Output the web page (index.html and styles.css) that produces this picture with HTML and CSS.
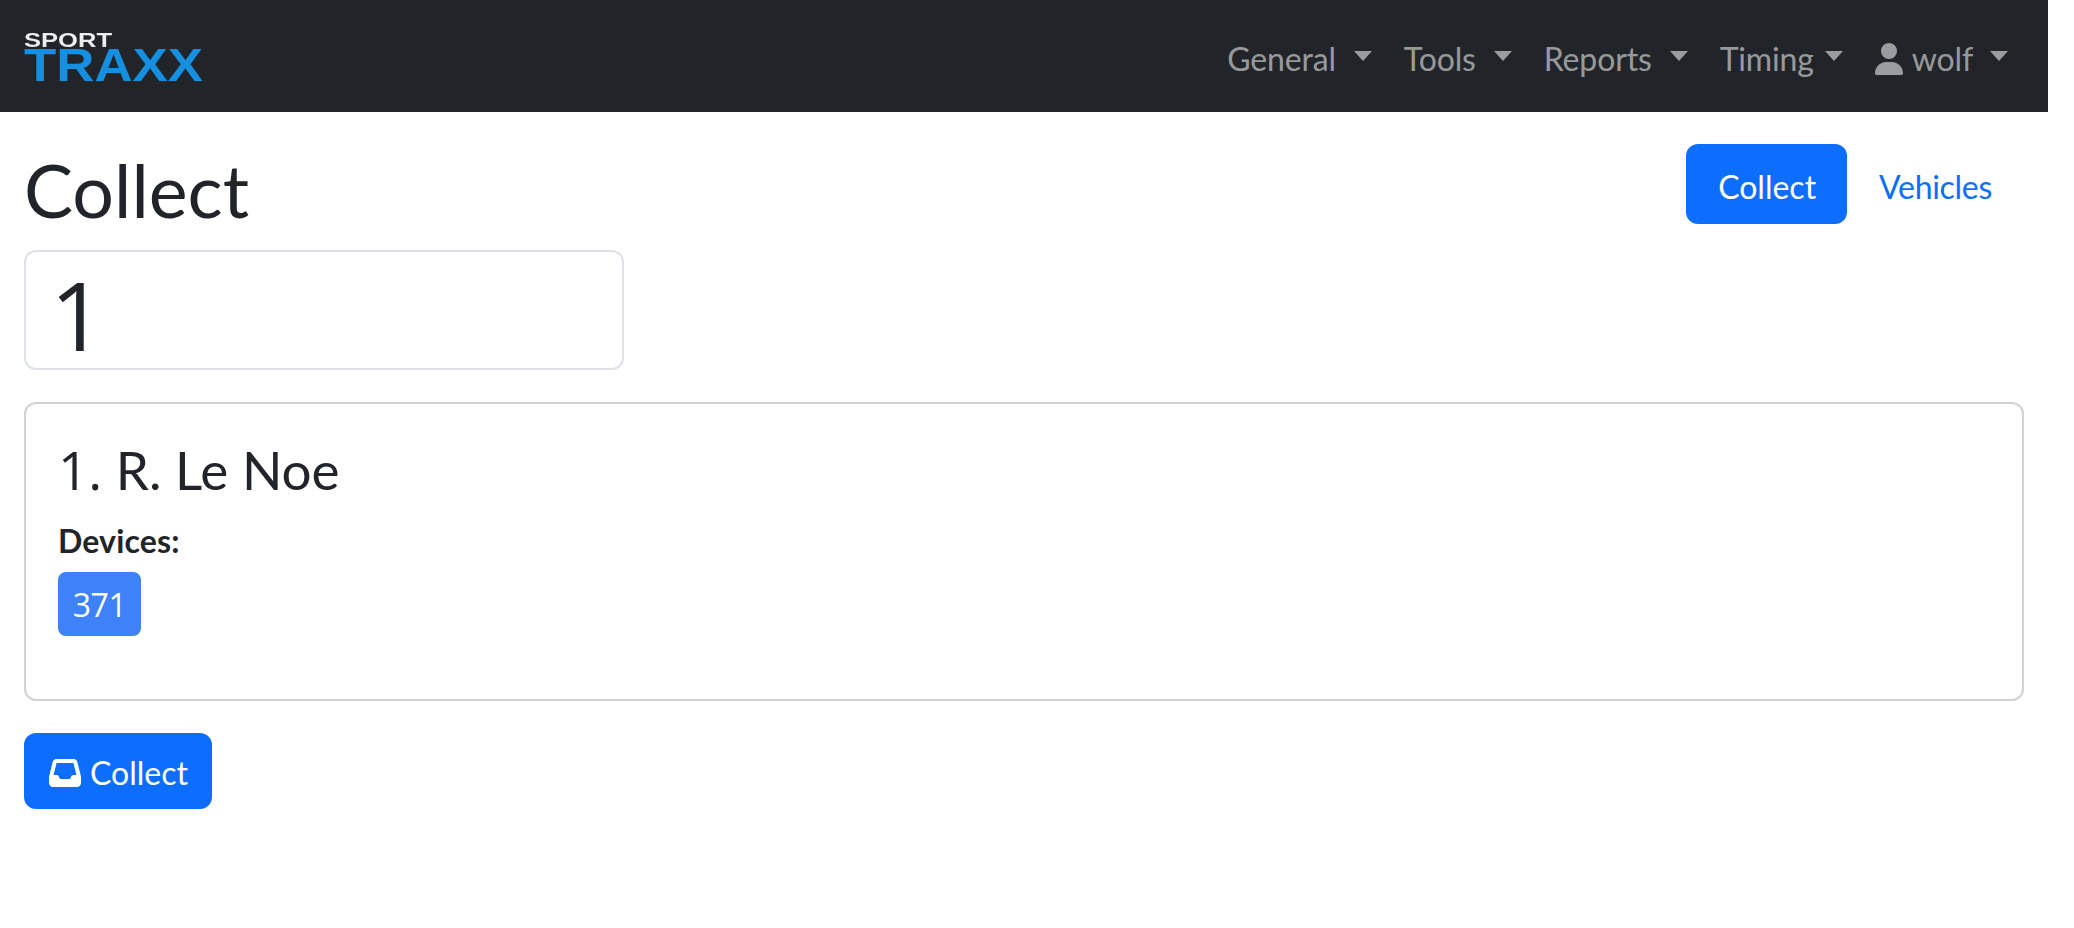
FILE: index.html
```html
<!DOCTYPE html>
<html lang="en">
<head>
<meta charset="utf-8">
<title>Collect</title>
<link rel="stylesheet" href="styles.css">
</head>
<body>
<nav class="navbar">
  <a class="brand" href="#">
    <svg class="logo" viewBox="0 0 180 48" width="180" height="48">
      <defs>
        <linearGradient id="sportfill" x1="0" y1="0" x2="0" y2="1">
          <stop offset="0" stop-color="#f4f4f4"/>
          <stop offset="0.6" stop-color="#dcdcdc"/>
          <stop offset="1" stop-color="#a0a2a4"/>
        </linearGradient>
      </defs>
      <text class="logo-text"><tspan class="logo-sport" x="0" y="14.5" textLength="88" lengthAdjust="spacingAndGlyphs" fill="url(#sportfill)">SPORT</tspan><tspan class="logo-traxx" x="0" y="48.5" textLength="179" lengthAdjust="spacingAndGlyphs">TRAXX</tspan></text>
    </svg>
  </a>
  <ul class="nav-menu">
    <li><a class="nav-item" href="#">General<span class="caret"></span></a></li>
    <li><a class="nav-item" href="#">Tools<span class="caret"></span></a></li>
    <li><a class="nav-item" href="#">Reports<span class="caret"></span></a></li>
    <li><a class="nav-item tight" href="#">Timing<span class="caret"></span></a></li>
    <li><a class="nav-item user" href="#">
      <svg class="user-icon" viewBox="0 0 448 512" width="28" height="32"><path d="M224 256A128 128 0 1 0 224 0a128 128 0 1 0 0 256zm-45.7 48C79.8 304 0 383.8 0 482.3C0 498.7 13.3 512 29.7 512H418.3c16.4 0 29.7-13.3 29.7-29.7C448 383.8 368.2 304 269.7 304H178.3z"/></svg>
      wolf<span class="caret"></span></a></li>
  </ul>
</nav>
<main class="page">
  <header class="page-head">
    <h1 class="title">Collect</h1>
    <div class="pills">
      <a class="pill active" href="#">Collect</a>
      <a class="pill vehicles" href="#">Vehicles</a>
    </div>
  </header>
  <input class="big-input" type="text" value="1">
  <section class="card">
    <h2 class="card-title"><span class="digits">1.</span> R. Le Noe</h2>
    <div class="devices-label">Devices:</div>
    <span class="device">371</span>
  </section>
  <button class="btn" type="button">
    <svg class="inbox-icon" viewBox="0 0 512 512" width="32" height="32"><path d="M121 32C91.6 32 66 52 58.9 80.5L1.9 308.4C.6 313.5 0 318.7 0 323.9V416c0 35.3 28.7 64 64 64H448c35.3 0 64-28.7 64-64V323.9c0-5.2-.6-10.4-1.9-15.5l-57-227.9C446 52 420.4 32 391 32H121zm0 64H391l48 192H387.8c-12.1 0-23.2 6.8-28.6 17.7l-14.3 28.6c-5.4 10.8-16.5 17.7-28.6 17.7H195.8c-12.1 0-23.2-6.8-28.6-17.7l-14.3-28.6c-5.4-10.8-16.5-17.7-28.6-17.7H73L121 96z"/></svg>
    Collect
  </button>
</main>
</body>
</html>
```
FILE: styles.css
```css
* { box-sizing: border-box; }
html, body { margin: 0; padding: 0; }
body {
  font-family: Lato, "Open Sans", "Liberation Sans", sans-serif;
  font-size: 32px;
  line-height: 48px;
  color: #212529;
  background: #fff;
  width: 2048px;
}
a { text-decoration: none; }
.digits { font-family: "Open Sans", sans-serif; }
.navbar {
  height: 112px;
  background: #212529;
  display: flex;
  align-items: center;
  justify-content: space-between;
  padding: 0 24px;
}
.brand { display: flex; }
.logo { display: block; overflow: visible; filter: blur(.6px); }
.logo-text { font-family: "Liberation Sans", sans-serif; font-weight: 700; }
.logo-sport { font-size: 21px; }
.logo-traxx { font-size: 46px; fill: #1590e0; }
.nav-menu { list-style: none; margin: 0; padding: 0; display: flex; }
.nav-item {
  display: flex;
  align-items: center;
  height: 80px;
  padding: 5px 16px 0;
  letter-spacing: -.15px;
  color: rgba(255, 255, 255, .55);
}
.caret {
  width: 0;
  height: 0;
  margin-left: 18px;
  margin-bottom: 5px;
  border-top: 10px solid currentColor;
  border-left: 9.5px solid transparent;
  border-right: 9.5px solid transparent;
}
.tight .caret { margin-left: 11px; }
.user .caret { margin-left: 17px; }
.user-icon { fill: currentColor; margin-right: 9px; }
.page { padding: 0 24px; }
.page-head { display: flex; justify-content: space-between; padding-top: 32px; height: 138px; }
.title { margin: 0; font-size: 73.5px; font-weight: 400; line-height: 92px; }
.pills { display: flex; height: 80px; }
.pill { display: flex; align-items: center; padding: 5px 32px 0; color: #0d6efd; border-radius: 12px; }
.pill.active { background: #0d6efd; color: #fff; padding-right: 31px; }
.vehicles { letter-spacing: -.3px; }
.big-input {
  display: block;
  width: 600px;
  height: 120px;
  border: 2px solid #dee2e6;
  border-radius: 12px;
  padding: 6px 24px 0;
  font-family: "Open Sans", sans-serif;
  font-size: 96px;
  color: #212529;
  outline: none;
}
.card {
  margin-top: 32px;
  height: 299px;
  border: 2px solid rgba(0, 0, 0, .175);
  border-radius: 12px;
  padding: 32px;
}
.card-title { margin: 0; font-size: 53px; font-weight: 400; line-height: 68px; }
.devices-label { margin-top: 13px; font-weight: 700; line-height: 48px; letter-spacing: .15px; }
.device {
  display: inline-block;
  margin-top: 7px;
  width: 83px;
  height: 64px;
  line-height: 66px;
  text-align: center;
  font-family: "Open Sans", sans-serif;
  letter-spacing: -.5px;
  background: #3d82f8;
  color: #fff;
  border-radius: 8px;
}
.btn {
  margin-top: 32px;
  display: flex;
  align-items: center;
  height: 76px;
  padding: 3px 24px 0 25px;
  background: #0d6efd;
  color: #fff;
  border: 0;
  border-radius: 12px;
  font: inherit;
}
.inbox-icon { fill: #fff; margin-right: 9px; }
```
